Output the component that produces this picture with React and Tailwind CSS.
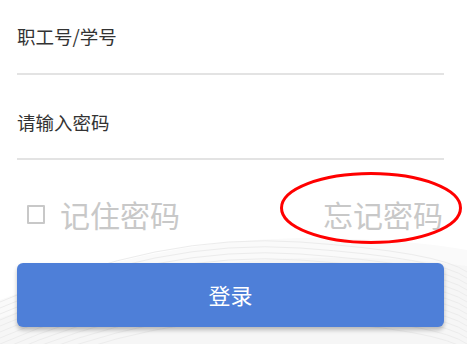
import React from 'react';

// faint wave background behind the login button
function WaveBackground() {
  const lines = [];
  for (let i = 0; i < 14; i++) {
    const y = 262 + i * 6;
    lines.push(
      <path
        key={i}
        d={`M0 ${y + 40} Q 160 ${y - 30} 300 ${y - 20} T 467 ${y + 10}`}
        fill="none"
        stroke="#ececec"
        strokeWidth="1"
      />
    );
  }
  return (
    <svg className="absolute inset-0 pointer-events-none" width="467" height="344" viewBox="0 0 467 344">
      <path d="M0 300 Q 150 240 300 238 Q 400 238 467 250 L467 344 L0 344 Z" fill="#fafafa" />
      <path d="M0 318 Q 150 262 300 258 Q 400 256 467 266 L467 344 L0 344 Z" fill="#f6f6f6" />
      {lines}
    </svg>
  );
}

export default function App() {
  return (
    <div
      className="relative w-[467px] h-[344px] overflow-hidden bg-white"
      style={{ fontFamily: '"Noto Sans CJK SC", "Noto Sans", sans-serif' }}
    >
      <WaveBackground />
      <div className="relative flex flex-col pl-[17px] pr-[23px]">
        {/* account field */}
        <div className="h-[75px] border-b-2 border-[#e3e3e3] pt-[24px]">
          <div className="text-[18.5px] leading-[24px] text-[#333333]">职工号/学号</div>
        </div>
        {/* password field */}
        <div className="h-[85px] border-b-2 border-[#e3e3e3] pt-[35px]">
          <div className="text-[18.5px] leading-[24px] text-[#333333]">请输入密码</div>
        </div>
        {/* remember / forgot */}
        <div className="relative h-[103px] flex items-start justify-between pt-[37px]">
          <div className="flex items-center pl-[10px]">
            <div className="w-[18px] h-[19px] border-2 border-[#c8c8c8] rounded-[1px]" />
            <span className="ml-[15px] text-[30px] leading-[34px] text-[#c8c8c8]">记住密码</span>
          </div>
          <span className="text-[30px] leading-[34px] text-[#c8c8c8] pr-[1px]">忘记密码</span>
          <svg className="absolute right-[-19px] top-[11px]" width="184" height="74" viewBox="0 0 184 74">
            <ellipse cx="92" cy="37" rx="89.5" ry="34.5" fill="none" stroke="#ff0000" strokeWidth="3" />
          </svg>
        </div>
        {/* login button */}
        <button className="h-[64px] w-full rounded-[6px] bg-[#4e7fd8] text-white text-[22px] leading-[30px] pb-[2px] shadow-[0_3px_4px_rgba(0,0,0,0.25)]">
          登录
        </button>
      </div>
    </div>
  );
}
